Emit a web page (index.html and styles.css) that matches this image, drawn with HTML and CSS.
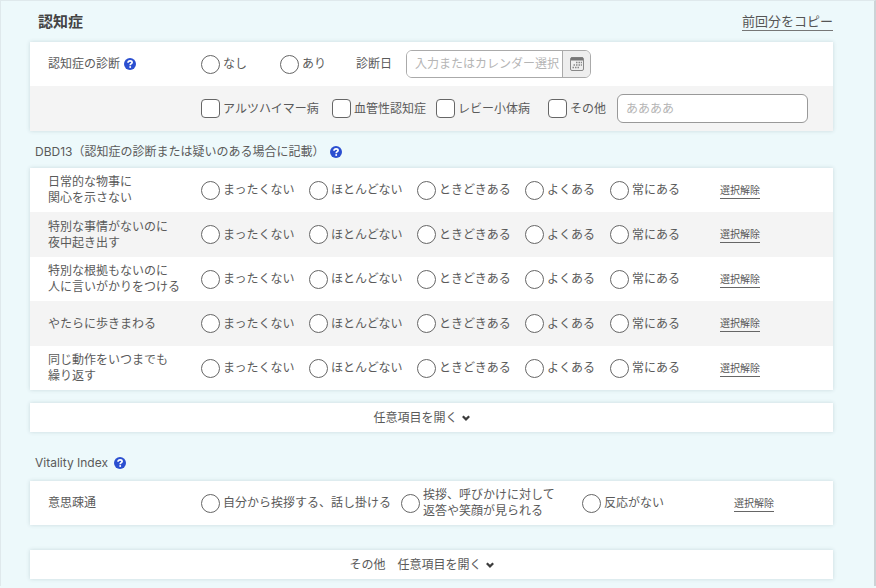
FILE: index.html
```html
<!DOCTYPE html>
<html lang="ja">
<head>
    <meta charset="UTF-8">
    <meta name="viewport" content="width=device-width, initial-scale=1.0">
    <title>認知症</title>
    <link rel="stylesheet" href="styles.css">
</head>
<body>

<svg class="defs" aria-hidden="true">
    <symbol id="help" viewBox="0 0 12 12">
        <circle cx="6" cy="6" r="6" fill="#2b4fd0"/>
        <path d="M4 4.700C4.100 3.300 5 2.800 6.100 2.800c1.200 0 2 .6 2 1.600C8.100 5.700 6.200 5.700 6.200 7.200" fill="none" stroke="#fff" stroke-width="1.700"/>
        <circle cx="6.200" cy="9" r="1" fill="#fff"/>
    </symbol>
    <symbol id="chevron" viewBox="0 0 8 6">
        <path d="M.8 1.200L4 4.400l3.200-3.200" fill="none" stroke="#3c3c3c" stroke-width="2.200"/>
    </symbol>
</svg>

<form class="page">
    <header class="page-head">
        <h1>認知症</h1>
        <a href="#" class="copy">前回分をコピー</a>
    </header>

    <section class="card">
        <div class="row diagnosis">
            <span class="item">認知症の診断 <svg class="help"><use href="#help"/></svg></span>
            <label class="choice"><input type="radio" name="diag">なし</label>
            <label class="choice"><input type="radio" name="diag">あり</label>
            <label for="date">診断日</label>
            <div class="date">
                <input type="text" id="date" placeholder="入力またはカレンダー選択">
                <button type="button" aria-label="カレンダー">
                    <svg width="14" height="14" viewBox="0 0 14 14">
                        <rect x=".5" y=".5" width="13" height="13" rx="1.500" fill="none" stroke="#888"/>
                        <path d="M1 2h12" stroke="#777" stroke-width="3"/>
                        <path d="M6 5.500h1.500M8.500 5.500H10M10.800 5.500h1.200M3.500 8H5M6 8h1.500M8.500 8H10M10.800 8h1.200M2.500 10.500H4M5 10.500h1.500M7.500 10.500H9" stroke="#888" stroke-width="1.500"/>
                    </svg>
                </button>
            </div>
        </div>
        <div class="row disease">
            <span class="item"></span>
            <label class="choice"><input type="checkbox">アルツハイマー病</label>
            <label class="choice"><input type="checkbox">血管性認知症</label>
            <label class="choice"><input type="checkbox">レビー小体病</label>
            <label class="choice"><input type="checkbox">その他</label>
            <input type="text" class="other" aria-label="その他の病名" placeholder="ああああ">
        </div>
    </section>

    <h2>DBD13（認知症の診断または疑いのある場合に記載） <svg class="help"><use href="#help"/></svg></h2>
    <section class="card">
        <div class="row dbd">
            <span class="item">日常的な物事に<br>関心を示さない</span>
            <label class="choice"><input type="radio" name="q1">まったくない</label>
            <label class="choice"><input type="radio" name="q1">ほとんどない</label>
            <label class="choice"><input type="radio" name="q1">ときどきある</label>
            <label class="choice"><input type="radio" name="q1">よくある</label>
            <label class="choice"><input type="radio" name="q1">常にある</label>
            <a href="#" class="clear">選択解除</a>
        </div>
        <div class="row dbd">
            <span class="item">特別な事情がないのに<br>夜中起き出す</span>
            <label class="choice"><input type="radio" name="q2">まったくない</label>
            <label class="choice"><input type="radio" name="q2">ほとんどない</label>
            <label class="choice"><input type="radio" name="q2">ときどきある</label>
            <label class="choice"><input type="radio" name="q2">よくある</label>
            <label class="choice"><input type="radio" name="q2">常にある</label>
            <a href="#" class="clear">選択解除</a>
        </div>
        <div class="row dbd">
            <span class="item">特別な根拠もないのに<br>人に言いがかりをつける</span>
            <label class="choice"><input type="radio" name="q3">まったくない</label>
            <label class="choice"><input type="radio" name="q3">ほとんどない</label>
            <label class="choice"><input type="radio" name="q3">ときどきある</label>
            <label class="choice"><input type="radio" name="q3">よくある</label>
            <label class="choice"><input type="radio" name="q3">常にある</label>
            <a href="#" class="clear">選択解除</a>
        </div>
        <div class="row dbd">
            <span class="item">やたらに歩きまわる</span>
            <label class="choice"><input type="radio" name="q4">まったくない</label>
            <label class="choice"><input type="radio" name="q4">ほとんどない</label>
            <label class="choice"><input type="radio" name="q4">ときどきある</label>
            <label class="choice"><input type="radio" name="q4">よくある</label>
            <label class="choice"><input type="radio" name="q4">常にある</label>
            <a href="#" class="clear">選択解除</a>
        </div>
        <div class="row dbd">
            <span class="item">同じ動作をいつまでも<br>繰り返す</span>
            <label class="choice"><input type="radio" name="q5">まったくない</label>
            <label class="choice"><input type="radio" name="q5">ほとんどない</label>
            <label class="choice"><input type="radio" name="q5">ときどきある</label>
            <label class="choice"><input type="radio" name="q5">よくある</label>
            <label class="choice"><input type="radio" name="q5">常にある</label>
            <a href="#" class="clear">選択解除</a>
        </div>
    </section>
    <button type="button" class="card more">任意項目を開く <svg class="chevron"><use href="#chevron"/></svg></button>

    <h2 class="vitality-title">Vitality Index <svg class="help"><use href="#help"/></svg></h2>
    <section class="card">
        <div class="row vitality">
            <span class="item">意思疎通</span>
            <label class="choice"><input type="radio" name="v1">自分から挨拶する、話し掛ける</label>
            <label class="choice"><input type="radio" name="v1"><span>挨拶、呼びかけに対して<br>返答や笑顔が見られる</span></label>
            <label class="choice"><input type="radio" name="v1">反応がない</label>
            <a href="#" class="clear">選択解除</a>
        </div>
    </section>
    <button type="button" class="card more more-last">その他　任意項目を開く <svg class="chevron"><use href="#chevron"/></svg></button>
</form>

</body>
</html>
```
FILE: styles.css
```css
* {
    box-sizing: border-box;
}
body {
    margin: 0;
    background-color: #edf9fb;
    color: #5a5a5a;
    font-family: Inter, "Noto Sans CJK JP", sans-serif;
    font-size: 12px;
    line-height: 16px;
}
input, button {
    font: inherit;
    color: inherit;
    margin: 0;
}
.defs {
    display: none;
}
.page {
    padding: 0 41px 7px 29px;
    border: 1px solid #dfe9ec;
    border-right: 2px solid #ccd3d6;
    border-bottom: 0;
}
.page-head {
    display: flex;
    justify-content: space-between;
    align-items: center;
    height: 41px;
    padding-left: 8px;
}
h1 {
    margin: 0;
    color: #444;
    font-size: 15px;
}
h2 {
    display: flex;
    align-items: center;
    gap: 6px;
    margin: 13px 0 8px 5px;
    font-size: 12px;
    font-weight: normal;
}
.vitality-title {
    margin: 23px 0 10px 5px;
}
.copy {
    border-bottom: 1px solid #777;
    color: #555;
    font-size: 13px;
    line-height: 18px;
    text-decoration: none;
}
.card {
    background-color: #fff;
    box-shadow: 0 0 4px rgba(60, 90, 100, 0.2);
}
.row {
    display: grid;
    align-items: center;
    min-height: 44px;
    padding-left: 18px;
}
.row:nth-child(even) {
    min-height: 45px;
    background-color: #f4f4f4;
}
.diagnosis {
    grid-template-columns: 153px 79px 76px 50px 185px;
}
.disease {
    grid-template-columns: 153px 131px 104px 112px 69px minmax(0, 1fr);
    padding-right: 25px;
}
.dbd {
    grid-template-columns: 153px 108px 108px 108px 85px 110px auto;
}
.vitality {
    grid-template-columns: 153px 200px 181px 152px auto;
}
.item {
    display: flex;
    align-items: center;
    gap: 4px;
}
.help {
    width: 12px;
    height: 12px;
}
.choice {
    display: flex;
    align-items: center;
    gap: 3px;
    white-space: nowrap;
}
.choice input {
    appearance: none;
    flex: none;
    width: 19px;
    height: 19px;
    border: 1px solid #666;
    border-radius: 4px;
    background-color: #fff;
}
.choice input[type="radio"] {
    border-radius: 50%;
}
.choice input:checked {
    box-shadow: inset 0 0 0 4px #fff;
    background-color: #2b4fd0;
}
.date {
    display: flex;
    height: 28px;
    border: 1px solid #aaa;
    border-radius: 6px;
    overflow: hidden;
}
.date input {
    flex: 1;
    min-width: 0;
    padding: 0 0 0 8px;
    border: 0;
}
.date button {
    display: flex;
    align-items: center;
    justify-content: center;
    width: 28px;
    padding: 0;
    border: 0;
    border-left: 1px solid #aaa;
    background-color: #eee;
}
.other {
    width: 100%;
    height: 29px;
    padding: 0 8px;
    border: 1px solid #999;
    border-radius: 6px;
    background-color: #fff;
}
::placeholder {
    color: #b5b5b5;
}
.clear {
    justify-self: start;
    border-bottom: 1px solid #666;
    color: #555;
    font-size: 10px;
    text-decoration: none;
}
.more {
    display: flex;
    align-items: center;
    justify-content: center;
    gap: 4px;
    width: 100%;
    height: 29px;
    margin-top: 13px;
    padding: 0 20px 0 0;
    border: 0;
}
.more-last {
    margin-top: 25px;
}
.chevron {
    width: 8px;
    height: 6px;
}
```
